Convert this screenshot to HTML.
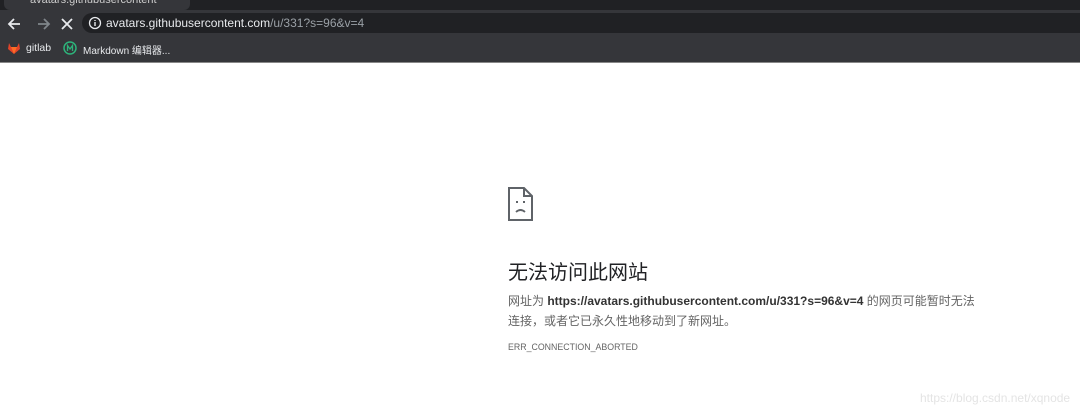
<!DOCTYPE html>
<html><head><meta charset="utf-8"><style>
body{margin:0;width:1080px;height:413px;background:#fff;position:relative;overflow:hidden;font-family:"Liberation Sans","Noto Sans CJK SC",sans-serif}
.a{position:absolute}
</style></head><body>
<div class="a" style="left:0;top:0;width:1080px;height:63px;background:#35363a"></div>
<div class="a" style="left:0;top:0;width:1080px;height:10px;background:#202124"></div>
<div class="a" style="left:4px;top:0;width:186px;height:10px;background:#35363a;border-radius:0 0 6px 6px"></div>
<div class="a" style="left:30px;top:-6px;font-size:11px;color:#ccc">avatars.githubusercontent</div>
<div class="a" style="left:0;top:62px;width:1080px;height:1px;background:#888"></div>
<svg class="a" style="left:6px;top:15px" width="80" height="18" viewBox="0 0 80 18">
<path d="M14 9H3M8 4L3 9l5 5" stroke="#e8eaed" stroke-width="1.8" fill="none"/>
<path d="M32 9h11M38 4l5 5-5 5" stroke="#80868b" stroke-width="1.8" fill="none"/>
<path d="M56 4l10 10M66 4L56 14" stroke="#e8eaed" stroke-width="1.8" fill="none"/>
</svg>
<div class="a" style="left:82px;top:13px;width:1010px;height:20px;background:#202124;border-radius:10px"></div>
<svg class="a" style="left:88px;top:16px" width="14" height="14"><circle cx="7" cy="7" r="5.5" stroke="#e8eaed" stroke-width="1.3" fill="none"/><path d="M7 6v4M7 4v1" stroke="#e8eaed" stroke-width="1.4"/></svg>
<div class="a" style="left:106px;top:16px;font-size:12px;color:#e8eaed;white-space:nowrap">avatars.githubusercontent.com<span style="color:#9aa0a6">/u/331?s=96&amp;v=4</span></div>
<svg class="a" style="left:7px;top:41px" width="14" height="14"><path d="M7 13L1 8 2 2l2 4h6l2-4 1 6z" fill="#e24329"/><path d="M7 13L4 6h6z" fill="#fc6d26"/></svg>
<div class="a" style="left:26px;top:42px;font-size:10.5px;color:#e8eaed">gitlab</div>
<svg class="a" style="left:63px;top:41px" width="14" height="14"><circle cx="7" cy="7" r="6" stroke="#2db37a" stroke-width="1.5" fill="none"/><path d="M4.5 10V4.5L7 8l2.5-3.5V10" stroke="#2db37a" stroke-width="1.3" fill="none"/></svg>
<div class="a" style="left:83px;top:42px;font-size:10px;color:#e8eaed;white-space:nowrap">Markdown 编辑器...</div>
<svg class="a" style="left:508px;top:187px" width="26" height="34" viewBox="0 0 26 34"><path d="M1 1h15l8 8v24H1z M16 1v8h8" stroke="#5f6368" stroke-width="2" fill="none"/><rect x="8" y="14" width="2" height="2" fill="#5f6368"/><rect x="15" y="14" width="2" height="2" fill="#5f6368"/><path d="M8 25q4.5-4 9 0" stroke="#5f6368" stroke-width="1.8" fill="none"/></svg>
<div class="a" style="left:508px;top:256px;font-size:20px;color:#202124;white-space:nowrap">无法访问此网站</div>
<div class="a" style="left:508px;top:291px;font-size:12px;line-height:20px;color:#646464;width:470px"><span style="white-space:nowrap">网址为 <b style="color:#333">https://avatars.githubusercontent.com/u/331?s=96&amp;v=4</b> 的网页可能暂时无法</span><br>连接，或者它已永久性地移动到了新网址。</div>
<div class="a" style="left:508px;top:342px;font-size:8.8px;color:#646464">ERR_CONNECTION_ABORTED</div>
<div class="a" style="left:920px;top:391px;font-size:12px;color:#e4e4e4">https://blog.csdn.net/xqnode</div>
</body></html>
